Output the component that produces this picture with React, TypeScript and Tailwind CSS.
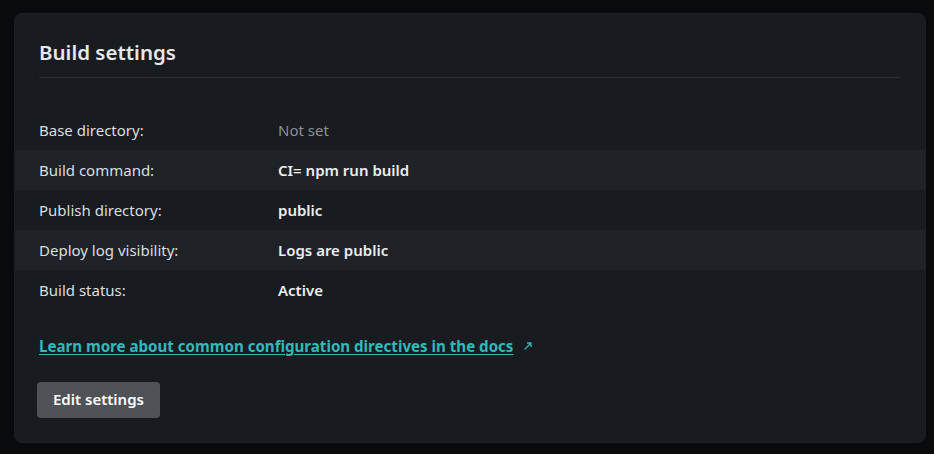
const rows = [
  { label: 'Base directory:', value: 'Not set', muted: true },
  { label: 'Build command:', value: 'CI= npm run build' },
  { label: 'Publish directory:', value: 'public' },
  { label: 'Deploy log visibility:', value: 'Logs are public' },
  { label: 'Build status:', value: 'Active' },
];

export default function App() {
  return (
    <div className="min-h-screen bg-[#080b0e] pt-[13px] pl-[14px] font-['Noto_Sans',sans-serif]">
      <section className="bg-[#181b1f] rounded-lg border border-[#1c1f23] pt-[22px] pb-6 w-[912px]">
        <h2 className="mx-6 text-[20.5px] leading-[32px] font-semibold text-[#e6e8ea] pb-[9px] border-b border-[#2a2d32]">
          Build settings
        </h2>

        <dl className="mt-8">
          {rows.map((row, i) => (
            <div key={row.label}
              className={`flex items-center h-10 px-6 text-[15px] ${i % 2 === 1 ? 'bg-[#1f2226]' : ''}`}>
              <dt className="w-[239px] text-[#dcdee0]">{row.label}</dt>
              <dd className={row.muted ? 'text-[#8d9095]' : 'font-semibold text-[#eceef0]'}>
                {row.value}
              </dd>
            </div>
          ))}
        </dl>

        <p className="mx-6 mt-[25px] text-[15.1px] flex items-center gap-2.5">
          <a href="#" className="font-bold text-[#31b9bb] underline underline-offset-2">
            Learn more about common configuration directives in the docs
          </a>
          <svg width="10" height="10" viewBox="0 0 10 10" className="text-[#31b9bb]">
            <path d="M1.5 8.5 L8 2 M4 2 H8 V6" stroke="currentColor" strokeWidth="1.3" fill="none" />
          </svg>
        </p>

        <button className="ml-[22px] mt-6 h-9 px-4 rounded bg-[#4f5257] text-[15px] font-semibold text-white">
          Edit settings
        </button>
      </section>
    </div>
  );
}
